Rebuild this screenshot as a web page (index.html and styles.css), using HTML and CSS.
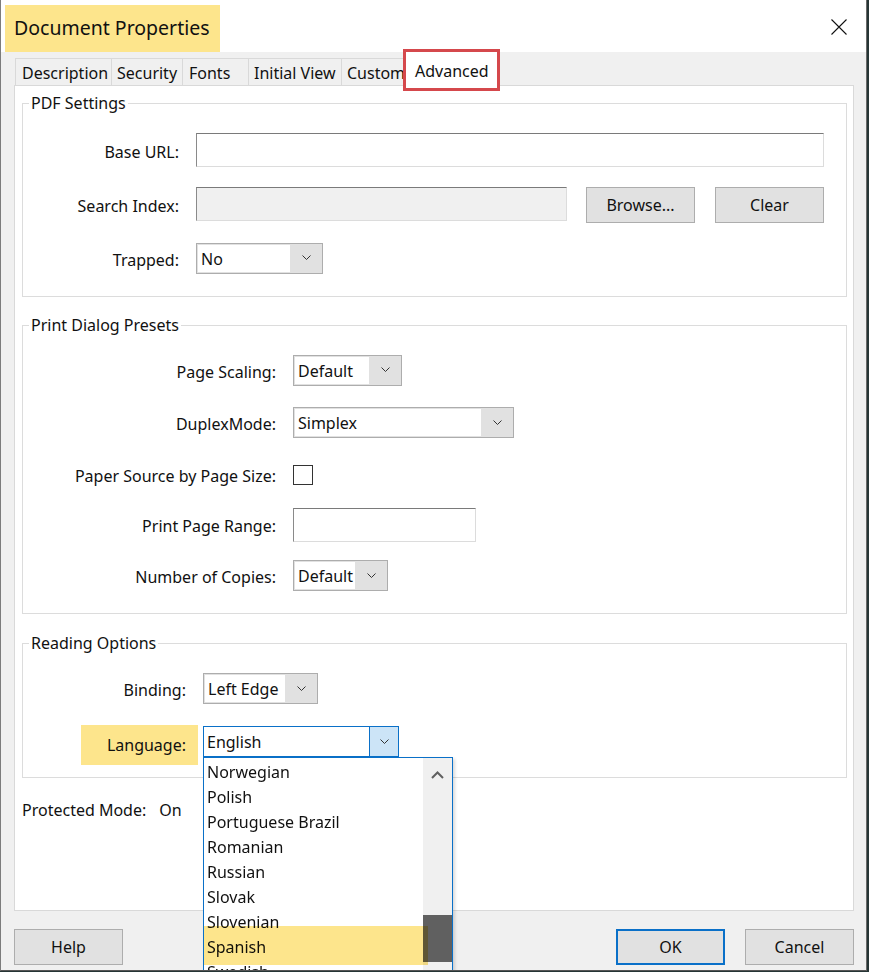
FILE: index.html
```html
<!DOCTYPE html>
<html lang="en">
<head>
<meta charset="utf-8">
<title>Document Properties</title>
<link rel="stylesheet" href="styles.css">
</head>
<body>
<div class="window">
  <div class="titlebar">
    <span class="title">Document Properties</span>
    <svg class="close" width="16" height="16" viewBox="0 0 16 16"><path d="M0.5 0.5 L15.5 15.5 M15.5 0.5 L0.5 15.5" stroke="#111" stroke-width="1.1" fill="none"/></svg>
  </div>

  <div class="tabs">
    <div class="tab tab-desc">Description</div>
    <div class="tab tab-sec">Security</div>
    <div class="tab tab-fonts">Fonts</div>
    <div class="tab tab-view">Initial View</div>
    <div class="tab tab-custom">Custom</div>
    <div class="tab tab-adv selected">Advanced<span class="annot"></span></div>
  </div>

  <div class="panel">
    <fieldset class="group group-pdf">
      <legend>PDF Settings</legend>
      <div class="form">
        <span class="lbl">Base URL:</span>
        <div class="textbox"></div>

        <span class="lbl">Search Index:</span>
        <div class="ctrl-row">
          <div class="textbox disabled"></div>
          <button class="btn">Browse...</button>
          <button class="btn">Clear</button>
        </div>

        <span class="lbl">Trapped:</span>
        <div class="combo w-trapped"><span class="field">No</span><span class="arrow"><svg width="9" height="5" viewBox="0 0 9 5"><polyline points="0.5,0.5 4.5,4.5 8.5,0.5" fill="none" stroke="#333" stroke-width="1"/></svg></span></div>
      </div>
    </fieldset>

    <fieldset class="group group-print">
      <legend>Print Dialog Presets</legend>
      <div class="form">
        <span class="lbl">Page Scaling:</span>
        <div class="combo w-scaling"><span class="field">Default</span><span class="arrow"><svg width="9" height="5" viewBox="0 0 9 5"><polyline points="0.5,0.5 4.5,4.5 8.5,0.5" fill="none" stroke="#333" stroke-width="1"/></svg></span></div>

        <span class="lbl">DuplexMode:</span>
        <div class="combo w-duplex"><span class="field">Simplex</span><span class="arrow"><svg width="9" height="5" viewBox="0 0 9 5"><polyline points="0.5,0.5 4.5,4.5 8.5,0.5" fill="none" stroke="#333" stroke-width="1"/></svg></span></div>

        <span class="lbl">Paper Source by Page Size:</span>
        <div class="checkbox"></div>

        <span class="lbl">Print Page Range:</span>
        <div class="textbox w-range"></div>

        <span class="lbl">Number of Copies:</span>
        <div class="combo w-copies"><span class="field">Default</span><span class="arrow"><svg width="9" height="5" viewBox="0 0 9 5"><polyline points="0.5,0.5 4.5,4.5 8.5,0.5" fill="none" stroke="#333" stroke-width="1"/></svg></span></div>
      </div>
    </fieldset>

    <fieldset class="group group-reading">
      <legend>Reading Options</legend>
      <div class="form">
        <span class="lbl">Binding:</span>
        <div class="combo w-binding"><span class="field">Left Edge</span><span class="arrow"><svg width="9" height="5" viewBox="0 0 9 5"><polyline points="0.5,0.5 4.5,4.5 8.5,0.5" fill="none" stroke="#333" stroke-width="1"/></svg></span></div>

        <span class="lbl highlight">Language:</span>
        <div class="combo open w-lang">
          <span class="field">English</span>
          <span class="arrow"><svg width="9" height="5" viewBox="0 0 9 5"><polyline points="0.5,0.5 4.5,4.5 8.5,0.5" fill="none" stroke="#333" stroke-width="1"/></svg></span>
          <div class="dropdown">
            <ul class="items">
              <li>Norwegian</li>
              <li>Polish</li>
              <li>Portuguese Brazil</li>
              <li>Romanian</li>
              <li>Russian</li>
              <li>Slovak</li>
              <li>Slovenian</li>
              <li>Spanish</li>
              <li>Swedish</li>
            </ul>
            <div class="scrollbar">
              <span class="scroll-up"><svg width="13" height="8" viewBox="0 0 13 8"><polyline points="1,7 6.5,1.5 12,7" fill="none" stroke="#606060" stroke-width="2"/></svg></span>
              <span class="thumb"></span>
            </div>
            <span class="pick-mark"></span>
          </div>
        </div>
      </div>
    </fieldset>

    <div class="protected"><span>Protected Mode:</span><span>On</span></div>
  </div>

  <div class="footer">
    <button class="btn">Help</button>
    <span class="spacer"></span>
    <button class="btn default">OK</button>
    <button class="btn">Cancel</button>
  </div>
</div>
</body>
</html>
```

FILE: styles.css
```css
* { box-sizing: border-box; }

html, body {
  margin: 0;
  padding: 0;
}

body {
  width: 869px;
  height: 972px;
  background: #263535;
  overflow: hidden;
  font-family: "Noto Sans", "Open Sans", sans-serif;
  font-size: 16px;
  color: #000;
}

.window {
  width: 867px;
  height: 971px;
  background: #f0f0f0;
  border-left: 1px solid #7c7c7c;
  border-right: 1px solid #6a6a6a;
  border-bottom: 1px solid #555;
  display: flex;
  flex-direction: column;
  overflow: hidden;
}

/* title bar */
.titlebar {
  height: 52px;
  flex: none;
  background: #fff;
  display: flex;
  align-items: flex-start;
}

.title {
  margin: 5px 0 0 4px;
  height: 47px;
  line-height: 46px;
  padding: 0 10px 0 9px;
  background: #fde58c;
  font-size: 19.5px;
  color: #111;
}

.close {
  margin: 19px 19px 0 auto;
}

/* tabs */
.tabs {
  flex: none;
  display: flex;
  align-items: flex-end;
  margin: 6px 0 0 14px;
  height: 27px;
  position: relative;
  z-index: 2;
}

.tab {
  height: 27px;
  line-height: 28px;
  border-top: 1px solid #d9d9d9;
  border-left: 1px solid #d9d9d9;
  background: #f0f0f0;
  padding-left: 6px;
  white-space: nowrap;
  color: #111;
}

.tab-desc { width: 96px; }
.tab-sec { width: 71px; padding-left: 5px; }
.tab-fonts { width: 66px; }
.tab-view { width: 93px; padding-left: 5px; }
.tab-custom { width: 65px; padding-left: 5px; border-right: 1px solid #d9d9d9; }

.tab.selected {
  position: relative;
  width: 93px;
  height: 35px;
  margin-bottom: -1px;
  margin-left: -1px;
  padding-left: 9px;
  background: #fff;
  border: 1px solid #d9d9d9;
  border-bottom: none;
  line-height: 38px;
}

.annot {
  position: absolute;
  left: -3px;
  right: -3px;
  top: -3px;
  bottom: -5px;
  border: 3px solid #d5484c;
}

/* panel */
.panel {
  flex: none;
  margin-left: 13px;
  width: 840px;
  height: 826px;
  background: #fff;
  border: 1px solid #d9d9d9;
  padding: 7px 6px 0 7px;
  display: flex;
  flex-direction: column;
}

.group {
  margin: 0;
  border: 1px solid #dcdcdc;
  padding: 0 22px 0 0;
  min-width: 0;
}

.group + .group { margin-top: 18px; }
.group-reading { margin-top: 19px !important; }

.group legend {
  margin-left: 6px;
  padding: 0 2px;
  line-height: 20px;
  font-size: 16px;
  color: #111;
}

.form {
  display: grid;
  align-items: center;
}

.group-pdf .form {
  grid-template-columns: 156px 1fr;
  column-gap: 17px;
  grid-auto-rows: 54px;
  padding: 10px 0 11px 0;
}

.group-print .form {
  grid-template-columns: 253px auto;
  grid-template-rows: 52px 53px 50px 51px 51px;
  justify-content: start;
  column-gap: 17px;
  padding: 9px 0 12px 0;
}

.group-reading .form {
  grid-template-columns: 175px auto;
  justify-content: start;
  column-gap: 5px;
  grid-auto-rows: 53px;
  padding: 9px 0 9px 0;
}

.lbl {
  justify-self: end;
  line-height: 22px;
  padding-top: 3px;
  color: #111;
  white-space: nowrap;
}

.group-reading .lbl {
  padding-right: 12px;
}

.lbl.highlight {
  background: #fde58c;
  height: 40px;
  line-height: 40px;
  padding-top: 0;
  padding-left: 26px;
  margin-top: 7px;
}

/* text boxes */
.textbox {
  height: 34px;
  background: #fff;
  border-top: 1px solid #7a7a7a;
  border-left: 1px solid #8a8a8a;
  border-right: 1px solid #dcdcdc;
  border-bottom: 1px solid #dcdcdc;
}

.textbox.disabled {
  background: #f0f0f0;
  flex: 1;
}

.textbox.w-range {
  width: 183px;
}

.ctrl-row {
  display: flex;
  align-items: flex-start;
  gap: 19px;
  padding-top: 2px;
}

.ctrl-row .btn + .btn { margin-left: 1px; }

/* buttons */
.btn {
  width: 109px;
  height: 36px;
  background: #e1e1e1;
  border: 1px solid #adadad;
  font-family: inherit;
  font-size: 16px;
  color: #111;
  padding: 0;
  margin: 0;
}

.btn.default {
  border: 2px solid #0a70c8;
}

/* combo boxes */
.combo {
  position: relative;
  height: 31px;
  display: flex;
  background: #e1e1e1;
  border: 1px solid #adadad;
  padding: 1px 0 1px 1px;
}

.combo .field {
  flex: 1;
  background: #fff;
  padding-left: 3px;
  line-height: 28px;
  color: #111;
  white-space: nowrap;
}

.combo .arrow {
  width: 32px;
  flex: none;
  display: flex;
  align-items: center;
  justify-content: center;
  padding-bottom: 1px;
}

.w-trapped { width: 127px; }
.w-scaling { width: 109px; }
.w-duplex { width: 221px; }
.w-copies { width: 95px; }
.w-binding { width: 115px; }

.combo.open {
  width: 196px;
  border: 1px solid #0a70c8;
  background: #fff;
  padding: 0;
}

.combo.open .field {
  line-height: 30px;
  padding-left: 3px;
}

.combo.open .arrow {
  width: 29px;
  background: #cce4f7;
  border-left: 1px solid #0a70c8;
}

.checkbox {
  width: 20px;
  height: 20px;
  border: 1px solid #333;
  background: #fff;
  margin-top: 2px;
}

/* dropdown list */
.dropdown {
  position: absolute;
  top: 30px;
  left: -1px;
  width: 250px;
  height: 240px;
  background: #fff;
  border: 1px solid #0a70c8;
  display: flex;
  z-index: 10;
  box-shadow: 2px 2px 3px rgba(0,0,0,0.15);
}

.items {
  list-style: none;
  margin: 0;
  padding: 1px 0 0 3px;
  flex: 1;
}

.items li {
  height: 25px;
  line-height: 27px;
  color: #111;
  white-space: nowrap;
}

.scrollbar {
  width: 29px;
  flex: none;
  background: #f0f0f0;
  display: flex;
  flex-direction: column;
  align-items: center;
}

.scroll-up {
  height: 32px;
  display: flex;
  align-items: center;
  justify-content: center;
  padding-top: 2px;
}

.thumb {
  width: 29px;
  height: 47px;
  margin-top: 125px;
  background: #606060;
}

.pick-mark {
  position: absolute;
  left: 0;
  top: 168px;
  width: 224px;
  height: 39px;
  background: #fde58c;
  mix-blend-mode: multiply;
}

.protected {
  margin-top: 21px;
  display: flex;
  gap: 13px;
  line-height: 22px;
  color: #111;
}

/* footer */
.footer {
  flex: none;
  display: flex;
  gap: 20px;
  padding: 18px 12px 0 13px;
}

.spacer { flex: 1; }
```
